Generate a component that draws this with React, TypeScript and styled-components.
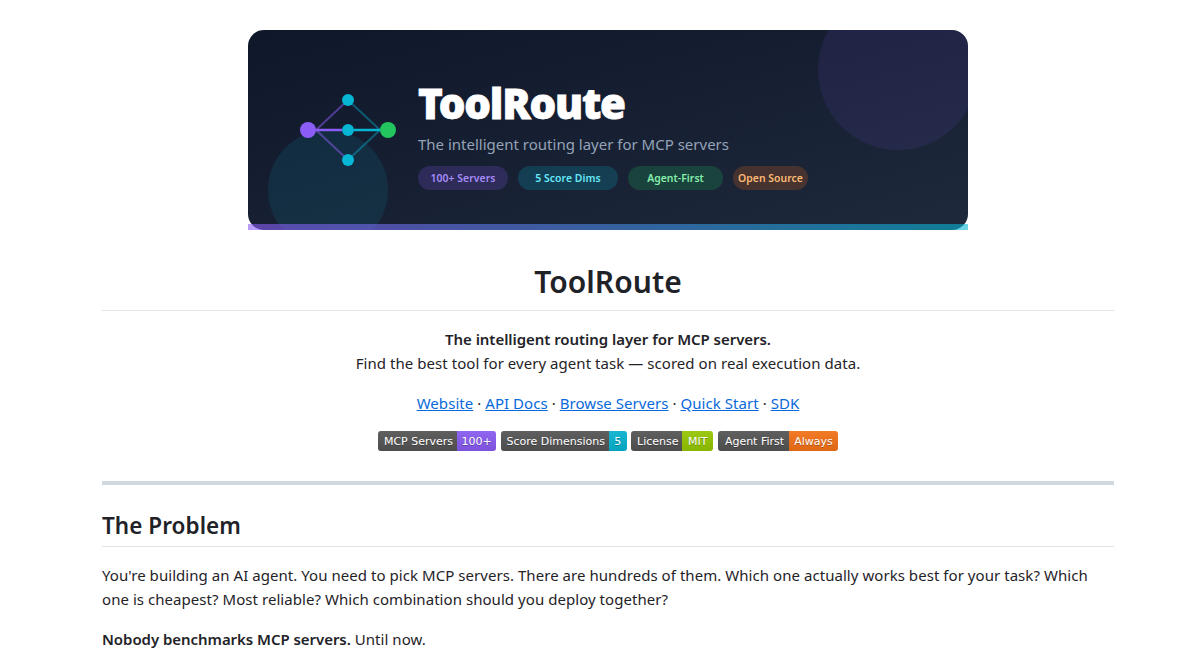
import React from "react";
import styled, { createGlobalStyle } from "styled-components";

const Global = createGlobalStyle`
  html, body { margin: 0; padding: 0; background: #fff; overflow: hidden; }
  body { font-family: "Noto Sans", "Open Sans", sans-serif; font-size: 15px; letter-spacing: 0.05px; line-height: 24px; color: #1f2328; }
`;

const Page = styled.main`
  width: 1012px;
  margin-left: 102px;
  padding-top: 30px;
  height: 663px;
  overflow: hidden;
  box-sizing: border-box;
`;

const Banner = styled.div`
  position: relative;
  width: 720px;
  height: 200px;
  margin: 0 auto;
  display: flex;
  align-items: flex-start;
`;

const BannerBg = styled.div`
  position: absolute;
  inset: 0;
  border-radius: 16px;
  overflow: hidden;
  background: linear-gradient(to bottom right, #0f172a 0%, #1e293b 100%);
`;

const Circle = styled.div<{ $size: number; $color: string; $left: number; $top: number }>`
  position: absolute;
  width: ${(p) => p.$size}px;
  height: ${(p) => p.$size}px;
  left: ${(p) => p.$left}px;
  top: ${(p) => p.$top}px;
  border-radius: 50%;
  background: ${(p) => p.$color};
`;

const Strip = styled.div`
  position: absolute;
  left: 0;
  right: 0;
  bottom: 0;
  height: 6px;
  background: linear-gradient(90deg, #8b5cf6, #06b6d4);
  opacity: 0.6;
`;

const Logo = styled.svg`
  position: relative;
  flex: none;
  margin: 60px 0 0 50px;
  width: 100px;
  height: 80px;
`;

const BannerBody = styled.div`
  position: relative;
  margin-left: 20px;
  padding-top: 47px;
`;

const BannerTitle = styled.div`
  font-size: 42px;
  font-weight: 900;
  line-height: 52px;
  color: #fff;
  letter-spacing: -1.2px;
  -webkit-text-stroke: 0.8px #fff;
`;

const BannerSub = styled.div`
  line-height: 24px;
  letter-spacing: 0;
  color: #94a3b8;
  margin-top: 3px;
`;

const Pills = styled.div`
  display: flex;
  gap: 10px;
  margin-top: 10px;
`;

const Pill = styled.span<{ $w: number; $bg: string; $fg: string }>`
  width: ${(p) => p.$w}px;
  height: 24px;
  border-radius: 12px;
  background: ${(p) => p.$bg};
  color: ${(p) => p.$fg};
  font-size: 10.4px;
  font-weight: 600;
  line-height: 24px;
  text-align: center;
  white-space: nowrap;
`;

const H1 = styled.h1`
  margin: 32px 0 0;
  padding-bottom: 8px;
  font-size: 30px;
  line-height: 40px;
  font-weight: 600;
  text-align: center;
  border-bottom: 1px solid #d1d9e0b3;
`;

const Center = styled.div`
  text-align: center;
`;

const P = styled.p`
  margin: 16px 0 0;
`;

const Strong = styled.strong`
  font-weight: 600;
  letter-spacing: -0.05px;
`;

const Link = styled.a`
  color: #0969da;
  text-decoration: underline;
`;

const Badges = styled.div`
  display: flex;
  justify-content: center;
  gap: 4.67px;
  margin-top: 16px;
  height: 20px;
`;

const Badge = styled.span`
  display: flex;
  height: 20px;
  border-radius: 3px;
  overflow: hidden;
  font-family: "DejaVu Sans", Verdana, sans-serif;
  font-size: 11px;
  letter-spacing: 0;
  line-height: 21px;
  color: #fff;
  text-shadow: 0 1px 0 rgba(1, 1, 1, 0.3);
`;

const BadgePart = styled.span<{ $w: number; $bg: string; $pad: number }>`
  box-sizing: border-box;
  width: ${(p) => p.$w}px;
  padding-left: ${(p) => p.$pad}px;
  background: linear-gradient(rgba(187, 187, 187, 0.1), rgba(0, 0, 0, 0.1)), ${(p) => p.$bg};
  text-align: center;
  white-space: nowrap;
`;

const Rule = styled.hr`
  height: 4px;
  margin: 30px 0 0;
  border: 0;
  background: #d1d9e0;
`;

const H2 = styled.h2`
  margin: 26px 0 0;
  padding-bottom: 5px;
  font-size: 22.5px;
  line-height: 30px;
  font-weight: 600;
  border-bottom: 1px solid #d1d9e0b3;
`;

const pills = [
  { t: "100+ Servers", w: 90, bg: "rgba(139,92,246,0.2)", fg: "#a78bfa" },
  { t: "5 Score Dims", w: 100, bg: "rgba(6,182,212,0.2)", fg: "#67e8f9" },
  { t: "Agent-First", w: 95, bg: "rgba(34,197,94,0.2)", fg: "#86efac" },
  { t: "Open Source", w: 75, bg: "rgba(249,115,22,0.2)", fg: "#fdba74" },
];

const badges = [
  { l: "MCP Servers", lw: 79, r: "100+", rw: 39, c: "#8b5cf6" },
  { l: "Score Dimensions", lw: 108, r: "5", rw: 18, c: "#06b6d4" },
  { l: "License", lw: 51, r: "MIT", rw: 31, c: "#97ca00" },
  { l: "Agent First", lw: 71, r: "Always", rw: 49, c: "#f97316" },
];

export default function App() {
  return (
    <Page>
      <Global />
      <Banner>
        <BannerBg>
          <Circle $size={160} $left={570} $top={-40} $color="rgba(139,92,246,0.1)" />
          <Circle $size={120} $left={20} $top={100} $color="rgba(6,182,212,0.1)" />
        </BannerBg>
        <Strip />
        <Logo viewBox="0 0 100 80">
          <path d="M18 40 50 10M18 40 50 70" stroke="#8b5cf6" strokeWidth="2" opacity="0.5" fill="none" />
          <path d="M50 10 82 40M50 70 82 40" stroke="#06b6d4" strokeWidth="2" opacity="0.4" fill="none" />
          <path d="M18 40H44" stroke="#8b5cf6" strokeWidth="2.5" />
          <path d="M56 40H82" stroke="#06b6d4" strokeWidth="2.5" />
          <circle cx="10" cy="40" r="8" fill="#8b5cf6" />
          <circle cx="50" cy="10" r="6" fill="#06b6d4" />
          <circle cx="50" cy="40" r="6" fill="#06b6d4" />
          <circle cx="50" cy="70" r="6" fill="#06b6d4" />
          <circle cx="90" cy="40" r="8" fill="#22c55e" />
        </Logo>
        <BannerBody>
          <BannerTitle>ToolRoute</BannerTitle>
          <BannerSub>The intelligent routing layer for MCP servers</BannerSub>
          <Pills>
            {pills.map((p) => (
              <Pill key={p.t} $w={p.w} $bg={p.bg} $fg={p.fg}>{p.t}</Pill>
            ))}
          </Pills>
        </BannerBody>
      </Banner>
      <H1>ToolRoute</H1>
      <Center>
        <P>
          <Strong>The intelligent routing layer for MCP servers.</Strong>
          <br />
          Find the best tool for every agent task — scored on real execution data.
        </P>
        <P>
          <Link href="#">Website</Link> · <Link href="#">API Docs</Link> · <Link href="#">Browse Servers</Link> · <Link href="#">Quick Start</Link> · <Link href="#">SDK</Link>
        </P>
        <Badges>
          {badges.map((b) => (
            <Badge key={b.l}>
              <BadgePart $w={b.lw} $bg="#555" $pad={2}>{b.l}</BadgePart>
              <BadgePart $w={b.rw} $bg={b.c} $pad={0}>{b.r}</BadgePart>
            </Badge>
          ))}
        </Badges>
      </Center>
      <Rule />
      <H2>The Problem</H2>
      <P>
        You're building an AI agent. You need to pick MCP servers. There are hundreds of them. Which one actually works best for your task? Which one is cheapest? Most reliable? Which combination should you deploy together?
      </P>
      <P>
        <Strong>Nobody benchmarks MCP servers.</Strong> Until now.
      </P>
    </Page>
  );
}
